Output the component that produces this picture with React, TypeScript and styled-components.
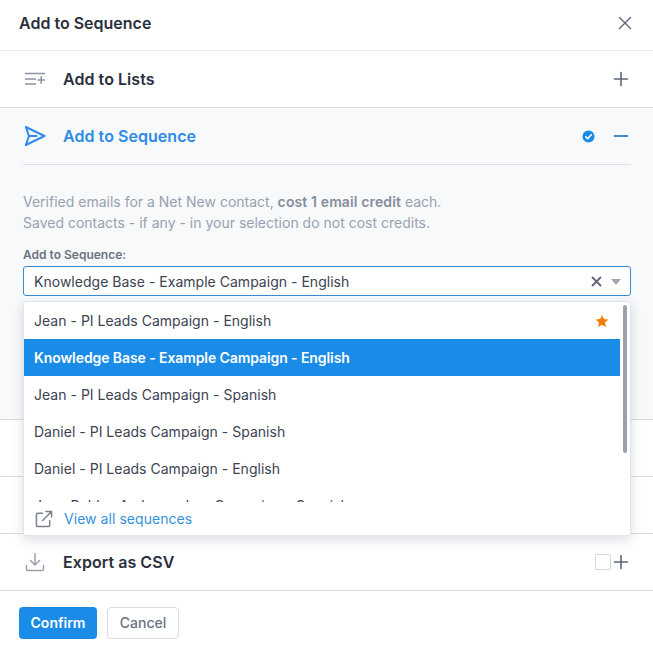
import React from "react";
import styled, { createGlobalStyle } from "styled-components";

const Global = createGlobalStyle`
  html, body { margin: 0; padding: 0; background: #fff; }
  body { font-family: Inter, "Noto Sans", sans-serif; color: #2a2f3c; }
  * { box-sizing: border-box; }
`;

const Modal = styled.div`
  width: 653px;
  height: 651px;
  display: flex;
  flex-direction: column;
  overflow: hidden;
  background: #fff;
`;

const Header = styled.header`
  height: 51px;
  flex: none;
  display: flex;
  align-items: center;
  justify-content: space-between;
  padding: 0 21px 5px 19px;
  border-bottom: 1px solid #e9ebef;
  font-size: 16px;
  font-weight: 600;
  line-height: 20px;
  color: #2a2f3c;
`;

const IconButton = styled.span`
  display: flex;
  color: #5e6578;
`;

const Row = styled.div`
  height: 57px;
  flex: none;
  display: flex;
  align-items: center;
  padding: 0 22px 0 23px;
  border-bottom: 1px solid #d5d9e2;
`;

const RowIcon = styled.span`
  width: 40px;
  flex: none;
  display: flex;
  color: #8d93a1;
`;

const RowTitle = styled.span<{ $active?: boolean }>`
  flex: 1;
  font-size: 16px;
  font-weight: 600;
  line-height: 20px;
  letter-spacing: 0.05px;
  color: ${(p) => (p.$active ? "#2d8ae6" : "#2a2f3c")};
`;

const Section = styled.section`
  height: 312px;
  flex: none;
  padding: 0 22px 0 23px;
  background: #f7f9fb;
  border-bottom: 1px solid #d5d9e2;
`;

const SectionHead = styled.div`
  height: 57px;
  display: flex;
  align-items: center;
  border-bottom: 1px solid #dcdfe6;
`;

const VerifiedDot = styled.span`
  display: flex;
  margin-right: 16px;
`;

const Note = styled.p`
  margin: 27px 0 0;
  font-size: 14px;
  line-height: 20.5px;
  color: #99a1af;
  b { font-weight: 600; color: #858d9c; letter-spacing: 0.12px; }
`;

const FieldLabel = styled.label`
  display: block;
  margin-top: 14px;
  font-size: 12px;
  font-weight: 600;
  line-height: 16px;
  color: #6b7280;
`;

const SelectWrap = styled.div`
  position: relative;
  margin-top: 3px;
`;

const SelectBox = styled.div`
  height: 30px;
  display: flex;
  align-items: center;
  padding: 1px 9px 0 10px;
  background: #fff;
  border: 1px solid #3a8ad0;
  border-radius: 3px;
  font-size: 14px;
  line-height: 18px;
  letter-spacing: 0.02px;
  color: #3c4352;
`;

const SelectValue = styled.span`
  flex: 1;
`;

const Caret = styled.span`
  width: 0;
  height: 0;
  margin-left: 9px;
  border-left: 5px solid transparent;
  border-right: 5px solid transparent;
  border-top: 6px solid #a0a5b0;
`;

const Menu = styled.div`
  position: absolute;
  top: 35px;
  left: 0;
  right: 0;
  height: 235px;
  background: #fff;
  border: 1px solid #e1e4ea;
  border-radius: 3px;
  box-shadow: 0 4px 12px rgba(40, 50, 70, 0.16);
  display: flex;
  flex-direction: column;
  overflow: hidden;
  z-index: 2;
`;

const OptionList = styled.div`
  height: 200px;
  flex: none;
  overflow: hidden;
  padding-right: 10px;
  position: relative;
`;

const Option = styled.div<{ $selected?: boolean }>`
  height: 37px;
  flex: none;
  display: flex;
  align-items: center;
  justify-content: space-between;
  padding: 0 10px;
  font-size: 14px;
  line-height: 18px;
  font-weight: ${(p) => (p.$selected ? 600 : 400)};
  letter-spacing: ${(p) => (p.$selected ? "-0.09px" : "0.02px")};
  color: ${(p) => (p.$selected ? "#fff" : "#3c4352")};
  background: ${(p) => (p.$selected ? "#1a8ce8" : "transparent")};
`;

const StarIcon = styled.svg`
  margin-right: 1px;
`;

const ScrollThumb = styled.span`
  position: absolute;
  top: 3px;
  right: 3px;
  width: 4px;
  height: 148px;
  border-radius: 2px;
  background: #9aa1ae;
`;

const MenuFooter = styled.div`
  flex: 1;
  display: flex;
  align-items: center;
  gap: 11px;
  padding: 0 0 0 11px;
  font-size: 14px;
  line-height: 18px;
  letter-spacing: 0.05px;
  color: #3592dd;
  background: #fff;
`;

const FooterIcon = styled.span`
  display: flex;
  color: #7b8190;
`;

const RowEnd = styled.span`
  display: flex;
  align-items: center;
  color: #5e6578;
`;

const CheckBox = styled.span`
  width: 16px;
  height: 16px;
  background: #fff;
  border: 1px solid #d4d7dd;
  border-radius: 2px;
`;

const Footer = styled.footer`
  flex: 1;
  display: flex;
  align-items: center;
  gap: 10px;
  padding: 4px 0 0 19px;
`;

const PrimaryButton = styled.button`
  width: 78px;
  height: 32px;
  border: 0;
  border-radius: 4px;
  background: #1a8ce8;
  color: #fff;
  font: 600 14px/18px Inter, sans-serif;
`;

const SecondaryButton = styled.button`
  width: 72px;
  height: 32px;
  border: 1px solid #d9dce2;
  border-radius: 4px;
  background: #fff;
  color: #6b7280;
  font: 500 14px/18px Inter, sans-serif;
`;

const Plus = () => (
  <svg width="20" height="20" viewBox="0 0 20 20" fill="none" stroke="currentColor" strokeWidth="1.6" strokeLinecap="round">
    <path d="M10 3.5v13M3.5 10h13" />
  </svg>
);

const Send = () => (
  <svg width="24" height="24" viewBox="0 0 24 24" fill="none" stroke="#2d8ae6" strokeWidth="2" strokeLinejoin="round" strokeLinecap="round">
    <path d="M2.800 3 L21.500 12 L2.800 21 L6 12 Z" />
    <path d="M6 12 H13.500" />
  </svg>
);

const ListAdd = () => (
  <svg width="24" height="24" viewBox="0 0 24 24" fill="none" stroke="currentColor" strokeWidth="1.5">
    <path d="M2 6.500h20M2 12h11M2 17h11M14.500 13h7.500M18.200 9.200v7.500" />
  </svg>
);

const Download = () => (
  <svg width="24" height="24" viewBox="0 0 24 24" fill="none" stroke="#9aa0ac" strokeWidth="1.500" strokeLinecap="round" strokeLinejoin="round">
    <path d="M12 3.500v11M7.500 10.500 12 15l4.500-4.500M3.500 15.500v3.500a1.500 1.500 0 0 0 1.500 1.500h14a1.500 1.500 0 0 0 1.500-1.500v-3.500" />
  </svg>
);

const External = () => (
  <svg width="18" height="18" viewBox="0 0 19 19" fill="none" stroke="currentColor" strokeWidth="1.6" strokeLinecap="round" strokeLinejoin="round">
    <path d="M8 3.500H3a1.500 1.500 0 0 0-1.500 1.500v11A1.500 1.500 0 0 0 3 17.500h11a1.500 1.500 0 0 0 1.500-1.500v-5" />
    <path d="M8 11 17.500 1.500M11.500 1.500h6v6" />
  </svg>
);

const options = [
  "Knowledge Base - Example Campaign - English",
  "Jean - PI Leads Campaign - Spanish",
  "Daniel - PI Leads Campaign - Spanish",
  "Daniel - PI Leads Campaign - English",
  "Jean Robles Ambassadors Campaign - Spanish",
];

export default function App() {
  return (
    <Modal>
      <Global />
      <Header>
        Add to Sequence
        <IconButton>
          <svg width="14" height="14" viewBox="0 0 14 14" fill="none" stroke="currentColor" strokeWidth="1.4" strokeLinecap="round">
            <path d="M1.500 1.500l11 11M12.500 1.500l-11 11" />
          </svg>
        </IconButton>
      </Header>
      <Row>
        <RowIcon><ListAdd /></RowIcon>
        <RowTitle>Add to Lists</RowTitle>
        <RowEnd><Plus /></RowEnd>
      </Row>
      <Section>
        <SectionHead>
          <RowIcon><Send /></RowIcon>
          <RowTitle $active>Add to Sequence</RowTitle>
          <VerifiedDot>
            <svg width="13" height="13" viewBox="0 0 13 13">
              <circle cx="6.500" cy="6.500" r="6" fill="#1a8ce8" />
              <path d="M3.800 6.800 5.700 8.600 9.300 4.800" fill="none" stroke="#fff" strokeWidth="1.600" strokeLinecap="round" strokeLinejoin="round" />
            </svg>
          </VerifiedDot>
          <RowEnd>
            <svg width="20" height="20" viewBox="0 0 20 20" fill="none" stroke="#4f86c6" strokeWidth="1.800" strokeLinecap="round">
              <path d="M3.500 10h13" />
            </svg>
          </RowEnd>
        </SectionHead>
        <Note>
          Verified emails for a Net New contact, <b>cost 1 email credit</b> each.
          <br />
          Saved contacts - if any - in your selection do not cost credits.
        </Note>
        <FieldLabel>Add to Sequence:</FieldLabel>
        <SelectWrap>
          <SelectBox>
            <SelectValue>Knowledge Base - Example Campaign - English</SelectValue>
            <svg width="11" height="11" viewBox="0 0 11 11" fill="none" stroke="#5e6578" strokeWidth="1.800" strokeLinecap="round">
              <path d="M1.500 1.500l8 8M9.500 1.500l-8 8" />
            </svg>
            <Caret />
          </SelectBox>
          <Menu>
            <OptionList>
              <Option>
                Jean - PI Leads Campaign - English
                <StarIcon width="14" height="14" viewBox="0 0 24 24" fill="#f57c00">
                  <path d="M12 1.500l3.200 7 7.600.9-5.600 5.200 1.500 7.500L12 18.300l-6.700 3.800 1.500-7.500L1.200 9.400l7.600-.9z" />
                </StarIcon>
              </Option>
              {options.map((o, i) => (
                <Option key={o} $selected={i === 0}>{o}</Option>
              ))}
              <ScrollThumb />
            </OptionList>
            <MenuFooter>
              <FooterIcon><External /></FooterIcon>
              View all sequences
            </MenuFooter>
          </Menu>
        </SelectWrap>
      </Section>
      <Row />
      <Row />
      <Row>
        <RowIcon><Download /></RowIcon>
        <RowTitle>Export as CSV</RowTitle>
        <RowEnd><CheckBox /><Plus /></RowEnd>
      </Row>
      <Footer>
        <PrimaryButton>Confirm</PrimaryButton>
        <SecondaryButton>Cancel</SecondaryButton>
      </Footer>
    </Modal>
  );
}
